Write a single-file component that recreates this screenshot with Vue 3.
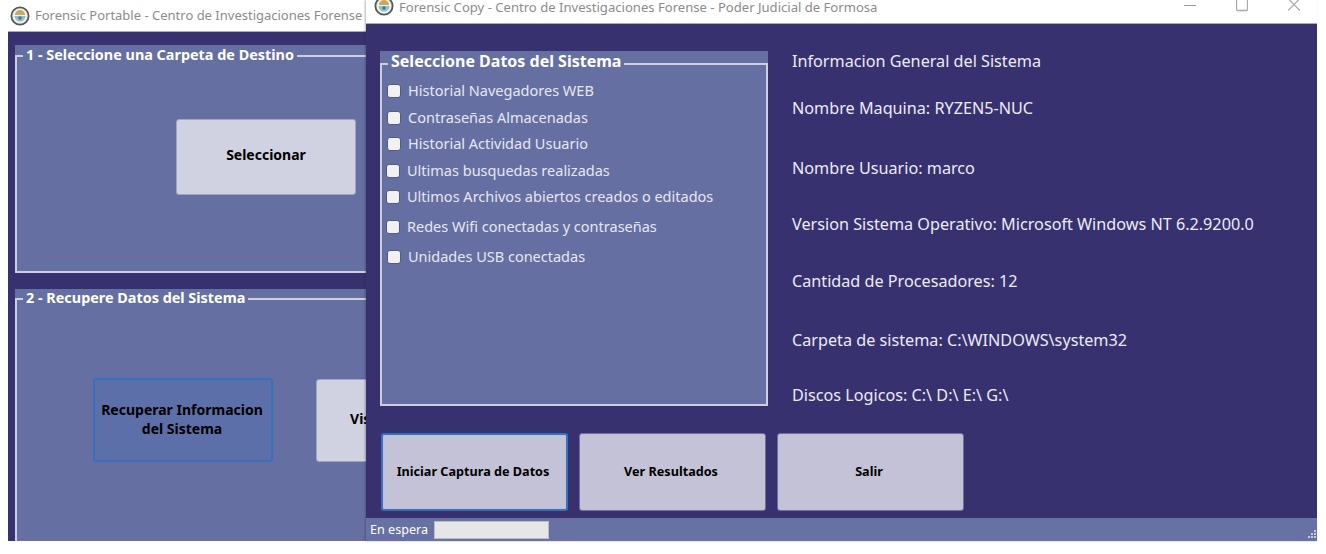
<script setup>
const options = [
  { label: 'Historial Navegadores WEB', cls: '' },
  { label: 'Contraseñas Almacenadas', cls: '' },
  { label: 'Historial Actividad Usuario', cls: '' },
  { label: 'Ultimas busquedas realizadas', cls: 'shift' },
  { label: 'Ultimos Archivos abiertos creados o editados', cls: 'shift' },
  { label: 'Redes Wifi conectadas y contraseñas', cls: 'shift wide' },
  { label: 'Unidades USB conectadas', cls: 'wide' }
]
const info = [
  { text: 'Informacion General del Sistema', gap: 0 },
  { text: 'Nombre Maquina: RYZEN5-NUC', gap: 47 },
  { text: 'Nombre Usuario: marco', gap: 60 },
  { text: 'Version Sistema Operativo: Microsoft Windows NT 6.2.9200.0', gap: 56 },
  { text: 'Cantidad de Procesadores: 12', gap: 57 },
  { text: 'Carpeta de sistema: C:\\WINDOWS\\system32', gap: 59 },
  { text: 'Discos Logicos: C:\\ D:\\ E:\\ G:\\', gap: 55 }
]
const actions = ['Iniciar Captura de Datos', 'Ver Resultados', 'Salir']
</script>

<template>
  <div class="desktop">
    <section class="window back">
      <header class="titlebar back-title">
        <svg class="seal" viewBox="0 0 20 20">
          <circle cx="10" cy="10" r="8.6" fill="#f4f1e4" stroke="#4d5a58" stroke-width="1.8" />
          <path d="M5 9a5 5 0 0 1 10 0z" fill="#c9a860" />
          <path d="M4.5 10h11a5.5 5.5 0 0 1-11 0z" fill="#8fc0d8" />
          <circle cx="10" cy="12" r="1.8" fill="#4d7f78" />
        </svg>
        <span>Forensic Portable - Centro de Investigaciones Forense - Poder Judicial de Formosa</span>
      </header>
      <div class="back-body">
        <div class="panel panel-one">
          <div class="legend"><i class="dash"></i><b>1 - Seleccione una Carpeta de Destino</b><i class="line"></i></div>
          <div class="panel-inner inner-one">
            <button class="btn light">Seleccionar</button>
          </div>
        </div>
        <div class="panel panel-two">
          <div class="legend"><i class="dash"></i><b>2 - Recupere Datos del Sistema</b><i class="line"></i></div>
          <div class="panel-inner inner-two">
            <button class="btn focused">Recuperar Informacion<br />del Sistema</button>
            <button class="btn light vis">Visualizar Datos</button>
          </div>
        </div>
      </div>
    </section>

    <section class="window front">
      <header class="titlebar front-title">
        <svg class="seal small" viewBox="0 0 20 20">
          <circle cx="10" cy="10" r="8.6" fill="#f4f1e4" stroke="#4d5a58" stroke-width="1.8" />
          <path d="M5 9a5 5 0 0 1 10 0z" fill="#c9a860" />
          <path d="M4.5 10h11a5.5 5.5 0 0 1-11 0z" fill="#8fc0d8" />
          <circle cx="10" cy="12" r="1.8" fill="#4d7f78" />
        </svg>
        <span class="front-name">Forensic Copy - Centro de Investigaciones Forense - Poder Judicial de Formosa</span>
        <div class="controls">
          <svg width="12" height="12" viewBox="0 0 12 12"><path d="M0 5.5h12" stroke="#9a9a9a" /></svg>
          <svg width="12" height="12" viewBox="0 0 12 12"><rect x="0.5" y="-1" width="11" height="11.5" rx="1" fill="none" stroke="#a8a8a8" stroke-width="1.3" /></svg>
          <svg width="12" height="12" viewBox="0 0 12 12"><path d="M0 -1.5L12 10.5M12 -1.5L0 10.5" stroke="#a8a8a8" stroke-width="1.2" /></svg>
        </div>
      </header>
      <div class="front-body">
        <div class="columns">
          <div class="panel data-panel">
            <div class="legend big"><i class="dash"></i><b>Seleccione Datos del Sistema</b><i class="line"></i></div>
            <div class="panel-inner options">
              <label v-for="o in options" :key="o.label" class="option" :class="o.cls">
                <input type="checkbox" />
                <span>{{ o.label }}</span>
              </label>
            </div>
          </div>
          <div class="info">
            <p v-for="line in info" :key="line.text" :style="{ marginTop: line.gap - 22 + 'px' }">{{ line.text }}</p>
          </div>
        </div>
        <div class="actions">
          <button v-for="(a, i) in actions" :key="a" class="btn action" :class="{ active: i === 0 }">{{ a }}</button>
        </div>
      </div>
      <footer class="status">
        <span>En espera</span>
        <div class="progress"></div>
        <svg class="grip" width="12" height="12" viewBox="0 0 12 12">
          <g fill="#c9cbd8">
            <rect x="9" y="1" width="2" height="2" /><rect x="6" y="4" width="2" height="2" />
            <rect x="9" y="4" width="2" height="2" /><rect x="3" y="7" width="2" height="2" />
            <rect x="6" y="7" width="2" height="2" /><rect x="9" y="7" width="2" height="2" />
          </g>
        </svg>
      </footer>
    </section>
  </div>
</template>

<style>
html, body { margin: 0; background: #fff; }
</style>

<style scoped>
.desktop {
  position: relative;
  width: 1326px;
  height: 554px;
  overflow: hidden;
  background: #fff;
  font-family: "Noto Sans", "Open Sans", sans-serif;
}
.window {
  position: absolute;
  top: 0;
  height: 541px;
  display: flex;
  flex-direction: column;
  overflow: hidden;
}
.back { left: 8px; width: 500px; }
.front { left: 366px; width: 951px; box-shadow: -1px 0 2px rgba(40, 40, 70, .35); }
.titlebar {
  display: flex;
  align-items: center;
  flex: none;
  box-sizing: border-box;
  background: #fff;
  color: #8c8c8c;
  font-size: 13px;
  white-space: nowrap;
}
.back-title { height: 32px; margin-left: -8px; padding: 0 0 0 10px; border-bottom: 1px solid #a9a8c6; gap: 5px; }
.back-title span { padding-bottom: 2px; }
.front-title { height: 24px; padding-left: 8px; border-bottom: 1px solid #a9a8c6; gap: 5px; font-size: 13.08px; }
.seal { width: 20px; height: 20px; flex: none; }
.seal.small { margin-top: -11px; }
.front-name { margin-top: -10px; }
.controls {
  margin-left: auto;
  margin-right: 17px;
  display: flex;
  gap: 40px;
  align-self: flex-start;
}
.back-body {
  flex: 1;
  min-height: 0;
  background: #38316f;
  padding: 13px 0 0 7px;
  display: flex;
  flex-direction: column;
  gap: 16px;
}
.panel {
  display: flex;
  flex-direction: column;
  background: #666fa1;
  flex: none;
}
.panel-one { height: 228px; }
.panel-two { height: 300px; }
.legend {
  display: flex;
  align-items: center;
  gap: 3px;
  height: 20px;
  flex: none;
  color: #fff;
  font-size: 14.4px;
  white-space: nowrap;
}
.panel-two .legend { height: 18px; }
.legend b { font-weight: 700; margin-top: -2px; }
.legend .dash,
.legend .line {
  align-self: flex-end;
  box-sizing: border-box;
  height: 50%;
  border-top: 2px solid #cdcfdf;
}
.legend .dash { width: 8px; border-left: 2px solid #cdcfdf; }
.legend .line { flex: 1; border-right: 2px solid #cdcfdf; }
.legend.big { height: 24px; font-size: 16px; }
.legend.big b { margin-top: -4px; }
.legend.big .dash { width: 8px; }
.panel-inner {
  flex: 1;
  box-sizing: border-box;
  border: 2px solid #cdcfdf;
  border-top: 0;
  display: flex;
  align-items: flex-start;
}
.inner-one { padding: 54px 0 0 159px; }
.inner-two { padding: 71px 0 0 76px; gap: 43px; }
.btn {
  margin: 0;
  font-family: inherit;
  font-weight: 700;
  color: #000;
  font-size: 14px;
  line-height: 18.5px;
  border-radius: 3px;
  box-sizing: border-box;
  cursor: default;
  padding: 0 0 3px;
}
.light {
  width: 180px;
  height: 76px;
  flex: none;
  background: #d0d2e2;
  border: 1px solid #9ea3c0;
}
.vis { height: 83px; margin-top: 1px; }
.focused {
  width: 180px;
  height: 84px;
  flex: none;
  background: #5d6fa8;
  border: 2px solid #3572bb;
  padding: 0 2px 1px 0;
}
.front-body {
  flex: 1;
  min-height: 0;
  background: #38316f;
  display: flex;
  flex-direction: column;
}
.columns {
  display: flex;
  padding: 27px 0 0 14px;
}
.data-panel { width: 388px; height: 355px; }
.options {
  flex-direction: column;
  padding: 3px 0 0 5px;
}
.option {
  display: flex;
  align-items: center;
  gap: 7px;
  height: 26.5px;
  flex: none;
  color: #e6e7f3;
  font-size: 14.5px;
  white-space: nowrap;
}
.option span { margin-top: -2px; }
.option.shift { margin-left: -1px; }
.option.wide { margin-top: 3.5px; }
.option input {
  appearance: none;
  margin: 0;
  width: 14px;
  height: 14px;
  flex: none;
  box-sizing: border-box;
  background: #f1f1f3;
  border: 1.5px solid #55597c;
  border-radius: 3px;
}
.info {
  padding: 21px 0 0 24px;
  color: #ecebf6;
  font-size: 16.2px;
  line-height: 22px;
  white-space: nowrap;
}
.info p { margin: 0; }
.actions {
  display: flex;
  gap: 11px;
  padding: 27px 0 0 15px;
}
.action {
  width: 187px;
  height: 78px;
  background: #c4c2d6;
  border: 1px solid #6f6e9a;
  font-size: 12.65px;
  padding: 0 3px 2px 0;
}
.action.active { border: 2px solid #3572bb; }
.status {
  flex: none;
  height: 23px;
  background: #6771a3;
  display: flex;
  align-items: center;
  padding-left: 4px;
  gap: 6px;
  color: #fff;
  font-size: 12.6px;
  position: relative;
}
.progress {
  width: 115px;
  height: 18px;
  box-sizing: border-box;
  background: #e6e6e6;
  border: 1px solid #bcbcc4;
}
.grip { position: absolute; right: 0; bottom: 0; }
</style>
